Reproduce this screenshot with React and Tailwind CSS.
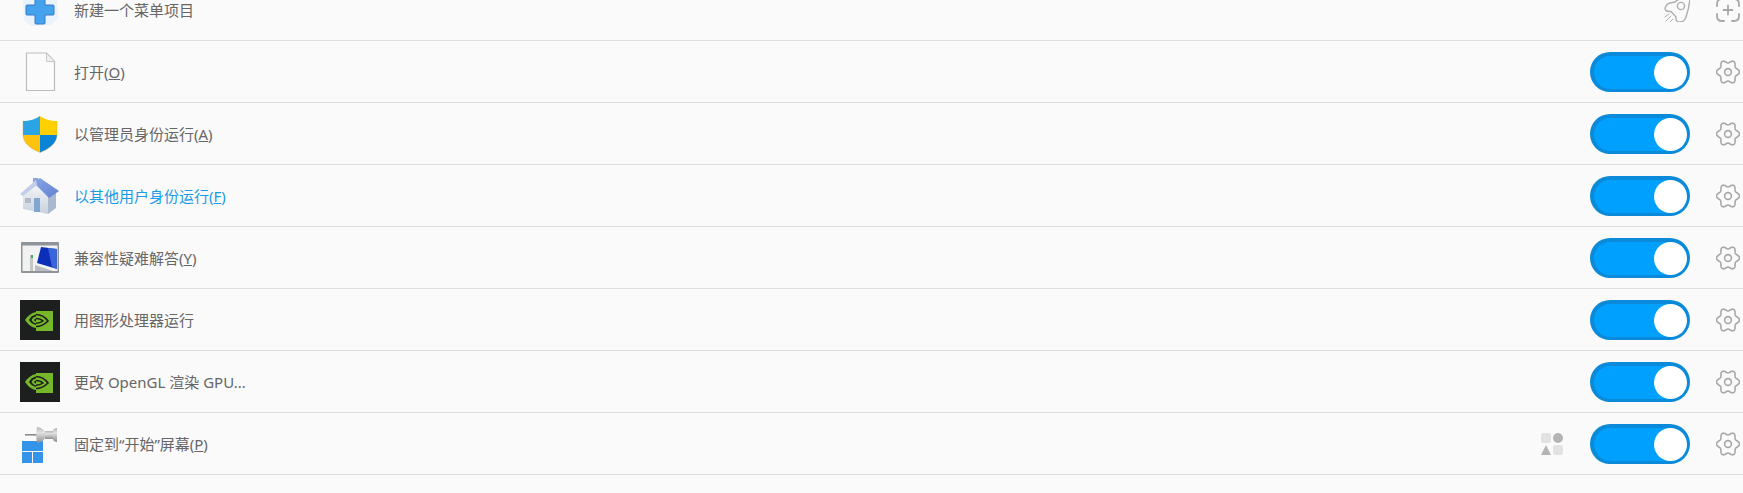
import React from 'react';

// six-lobed outline for the settings gear
const gearPath = (() => {
  const pts = [];
  for (let i = 0; i < 96; i++) {
    const a = (i / 96) * Math.PI * 2;
    const r = 10 + 1.5 * Math.cos(6 * a);
    pts.push(`${(12 + r * Math.cos(a)).toFixed(2)} ${(12 + 1.06 * r * Math.sin(a)).toFixed(2)}`);
  }
  return `M${pts.join(' L')} Z`;
})();

const PlusIcon = () => (
  <svg width="40" height="40" viewBox="0 0 40 40">
    <path d="M3 9 L13 5 L28 3 L37 8 L38 28 L30 35 L11 36 L4 30 Z" fill="#e8f3fc" />
    <path d="M16 6 H24 a1 1 0 0 1 1 1 V15 H33 a1 1 0 0 1 1 1 V24 a1 1 0 0 1 -1 1 H25 V33 a1 1 0 0 1 -1 1 H16 a1 1 0 0 1 -1 -1 V25 H7 a1 1 0 0 1 -1 -1 V16 a1 1 0 0 1 1 -1 H15 V7 a1 1 0 0 1 1 -1 Z" fill="#45a3ee" stroke="#3a78c6" strokeWidth="1" />
  </svg>
);

const FileIcon = () => (
  <svg width="40" height="40" viewBox="0 0 40 40">
    <path d="M6.5 1 H26.5 L34.5 9.5 V38.5 H6.5 Z" fill="#fbfbfb" stroke="#bdbdbd" strokeWidth="1.2" />
    <path d="M26.5 1 V9.5 H34.5 Z" fill="#f0f0f0" stroke="#c8c8c8" strokeWidth="1" />
  </svg>
);

const ShieldIcon = () => (
  <svg width="40" height="40" viewBox="0 0 40 40">
    <path d="M20 2 C16 5 9 7 3 7 V21 H20 Z" fill="#2aa4e4" />
    <path d="M20 2 C24 5 31 7 37 7 V21 H20 Z" fill="#ffd000" />
    <path d="M3 21 C3 29 11 35 20 38.5 V21 Z" fill="#ffc20e" />
    <path d="M37 21 C37 29 29 35 20 38.5 V21 Z" fill="#0a84d6" />
    <path d="M3 7 V21 C3 29 11 35 20 38.5 C29 35 37 29 37 21 V7" fill="none" stroke="#c8a030" strokeWidth="0.6" opacity="0.6" />
  </svg>
);

const HouseIcon = () => (
  <svg width="40" height="40" viewBox="0 0 40 40" className="blur-[0.4px]">
    <defs>
      <linearGradient id="wall" x1="0" y1="0" x2="0" y2="1">
        <stop offset="0" stopColor="#f6f7f9" />
        <stop offset="1" stopColor="#c6d0dd" />
      </linearGradient>
      <linearGradient id="roof" x1="0" y1="0" x2="1" y2="1">
        <stop offset="0" stopColor="#8ba4e4" />
        <stop offset="1" stopColor="#5f80d2" />
      </linearGradient>
    </defs>
    <path d="M13 2 H18 V7 H13 Z" fill="#8ca3dc" />
    <path d="M3 18 L16 8 L28 19 L28 38 L3 33 Z" fill="url(#wall)" />
    <path d="M28 19 L36 15 L36 32 L28 38 Z" fill="#aab9cd" />
    <path d="M15 5 L20 2 L39 15 L29 22 L16 9 Z" fill="url(#roof)" />
    <path d="M0 18 L16 4 L17 9 L3 20 Z" fill="#c2cfe9" />
    <path d="M14 22 H20 V36 H14 Z" fill="#82a6cf" />
    <path d="M5 22 H11 V27 H5 Z" fill="#b2bcc9" />
  </svg>
);

const CompatIcon = () => (
  <svg width="40" height="40" viewBox="0 0 40 40" className="blur-[0.3px]">
    <rect x="1" y="4" width="38" height="31" rx="1" fill="#8f949b" />
    <rect x="2.5" y="7.5" width="35" height="25.5" fill="#f2f2f2" />
    <path d="M21 9 L37 11 V31 L17 25 Z" fill="#0b2fb8" />
    <path d="M28 10 L37 11 V31 L32 29 Z" fill="#4a78e0" opacity="0.75" />
    <path d="M10 17 H13 V33 H10 Z" fill="#c4c8c4" />
    <rect x="11" y="17" width="2" height="3" fill="#4fa860" />
    <path d="M15 27 L33 33 H15 Z" fill="#b9bcc0" />
  </svg>
);

const NvidiaIcon = () => (
  <svg width="40" height="40" viewBox="0 0 40 40">
    <rect width="40" height="40" fill="#1d1f1e" />
    <rect x="16" y="11" width="17" height="20" fill="#76b82a" />
    <path d="M16 12 C11 13 7.5 16 5 20 C8 24.5 12 27.5 16 28 Z" fill="#76b82a" />
    <path d="M16 14.5 C13 15 10.5 17 9 20 C10.5 22.5 13 24.5 16 25 Z" fill="#1d1f1e" />
    <path d="M16 16.5 C14 16.8 12.5 18 11.5 20 C12.5 22 14 23 16 23.5 Z" fill="#76b82a" />
    <path d="M16 18.5 C15 18.7 14.3 19.2 14 20 C14.3 20.8 15 21.3 16 21.5 Z" fill="#1d1f1e" />
    <path d="M16 14.5 C21 14.5 25 17 28 21 C25 24 21 26.5 16 26.5" fill="none" stroke="#1d1f1e" strokeWidth="1.7" />
    <path d="M16 18.5 C19 18.5 21.5 19.5 23 21 C21 22.5 19 23.2 16 23.2" fill="none" stroke="#1d1f1e" strokeWidth="1.5" />
  </svg>
);

const PinIcon = () => (
  <svg width="40" height="40" viewBox="0 0 40 40">
    <defs>
      <linearGradient id="metal" x1="0" y1="0" x2="0" y2="1">
        <stop offset="0" stopColor="#b5b5b5" />
        <stop offset="0.35" stopColor="#e2e2e2" />
        <stop offset="1" stopColor="#8f8f8f" />
      </linearGradient>
    </defs>
    <rect x="2" y="17" width="21" height="10" fill="#3394ea" />
    <rect x="2" y="28" width="10" height="11" fill="#3394ea" />
    <rect x="13" y="28" width="10" height="11" fill="#3394ea" />
    <rect x="5" y="10" width="12" height="1.6" fill="#8c8c8c" />
    <path d="M25 7 H33 V15 H25 Z" fill="url(#metal)" />
    <path d="M33 6 C34 4.5 36 4 37 4 V18 C36 18 34 17.5 33 16 Z" fill="url(#metal)" />
    <path d="M17 3 C20 3 25 6 25 9 V13 C25 16 20 19 17 19 C16 14 16 8 17 3 Z" fill="url(#metal)" />
  </svg>
);

const Toggle = () => (
  <div className="flex h-10 w-[100px] items-center justify-end rounded-full border-[3px] border-t-4 border-l-4 border-[#0a8ad8] bg-[#00a0ff]">
    <div className="h-[33px] w-[33px] rounded-full bg-white" />
  </div>
);

const GearIcon = () => (
  <svg width="24" height="24" viewBox="0 0 24 24" fill="none" stroke="#a8a8a8" strokeWidth="1.6" strokeLinejoin="round">
    <path d={gearPath} />
    <circle cx="12" cy="12" r="3.4" />
  </svg>
);

const RocketIcon = () => (
  <svg width="27" height="24" viewBox="0 0 27 24" fill="none" stroke="#aeaeae" strokeWidth="1.4" strokeLinejoin="round" strokeLinecap="round">
    <path d="M27 -2 C22 -1 16 0 12 4 L7 5 C5 5.5 3 7.5 2 10 C2 12 3 13.5 6 13.5 L8 13.5 L13 19 L13 21 C13 23 15 24 17 24 C20 24 22 22 23 19 C25 13 27 6 27 -2 Z" />
    <circle cx="18" cy="8" r="3.6" />
    <path d="M2 19 L6 16 M3 23 L8 18 M7 24 L10 21" strokeWidth="1" />
  </svg>
);

const DashedPlusIcon = () => (
  <svg width="24" height="24" viewBox="0 0 24 24" fill="none" stroke="#a8a8a8" strokeWidth="1.8" strokeLinecap="round">
    <path d="M1 8 V6 Q1 1 6 1 H8 M16 1 H18 Q23 1 23 6 V8 M23 16 V18 Q23 23 18 23 H16 M8 23 H6 Q1 23 1 18 V16" />
    <path d="M12 7.5 V16.5 M7.5 12 H16.5" />
  </svg>
);

const AppsIcon = () => (
  <div className="grid w-[22px] grid-cols-2 gap-[2px]">
    <div className="h-[10px] w-[10px] rounded-[2px] bg-[#e2e2e2]" />
    <div className="h-[10px] w-[10px] rounded-full bg-[#b4b4b4]" />
    <svg width="10" height="10" viewBox="0 0 10 10"><path d="M5 0 L10 10 H0 Z" fill="#b4b4b4" /></svg>
    <div className="h-[10px] w-[10px] rounded-[2px] bg-[#e2e2e2]" />
  </div>
);

const rows = [
  { icon: <FileIcon />, label: <>打开(<u>O</u>)</> },
  { icon: <ShieldIcon />, label: <>以管理员身份运行(<u>A</u>)</> },
  { icon: <HouseIcon />, label: <>以其他用户身份运行(<u>F</u>)</>, link: true },
  { icon: <CompatIcon />, label: <>兼容性疑难解答(<u>Y</u>)</> },
  { icon: <NvidiaIcon />, label: '用图形处理器运行' },
  { icon: <NvidiaIcon />, label: '更改 OpenGL 渲染 GPU...' },
  { icon: <PinIcon />, label: <>固定到“开始”屏幕(<u>P</u>)</>, apps: true },
];

const App = () => {
  return (
    <div className="h-[493px] w-full overflow-hidden bg-[#fafafa] font-['Noto_Sans','Noto_Sans_CJK_SC',sans-serif] text-[15px] text-[#666]">
      <div className="-mt-[21px] flex h-[62px] items-center border-b border-[#dedede] pl-5 pr-[3px] pt-px">
        <PlusIcon />
        <span className="ml-[14px] flex-1">新建一个菜单项目</span>
        <RocketIcon />
        <div className="ml-[26px]"><DashedPlusIcon /></div>
      </div>
      {rows.map((row, i) => (
        <div key={i} className="flex h-[62px] items-center border-b border-[#dedede] pl-5 pr-[3px] pt-px">
          {row.icon}
          <span className={`ml-[14px] flex-1 ${row.link ? 'text-[#1a9be8]' : ''}`}>{row.label}</span>
          {row.apps && <div className="mr-[27px]"><AppsIcon /></div>}
          <Toggle />
          <div className="ml-[26px]"><GearIcon /></div>
        </div>
      ))}
    </div>
  );
};

export default App;
